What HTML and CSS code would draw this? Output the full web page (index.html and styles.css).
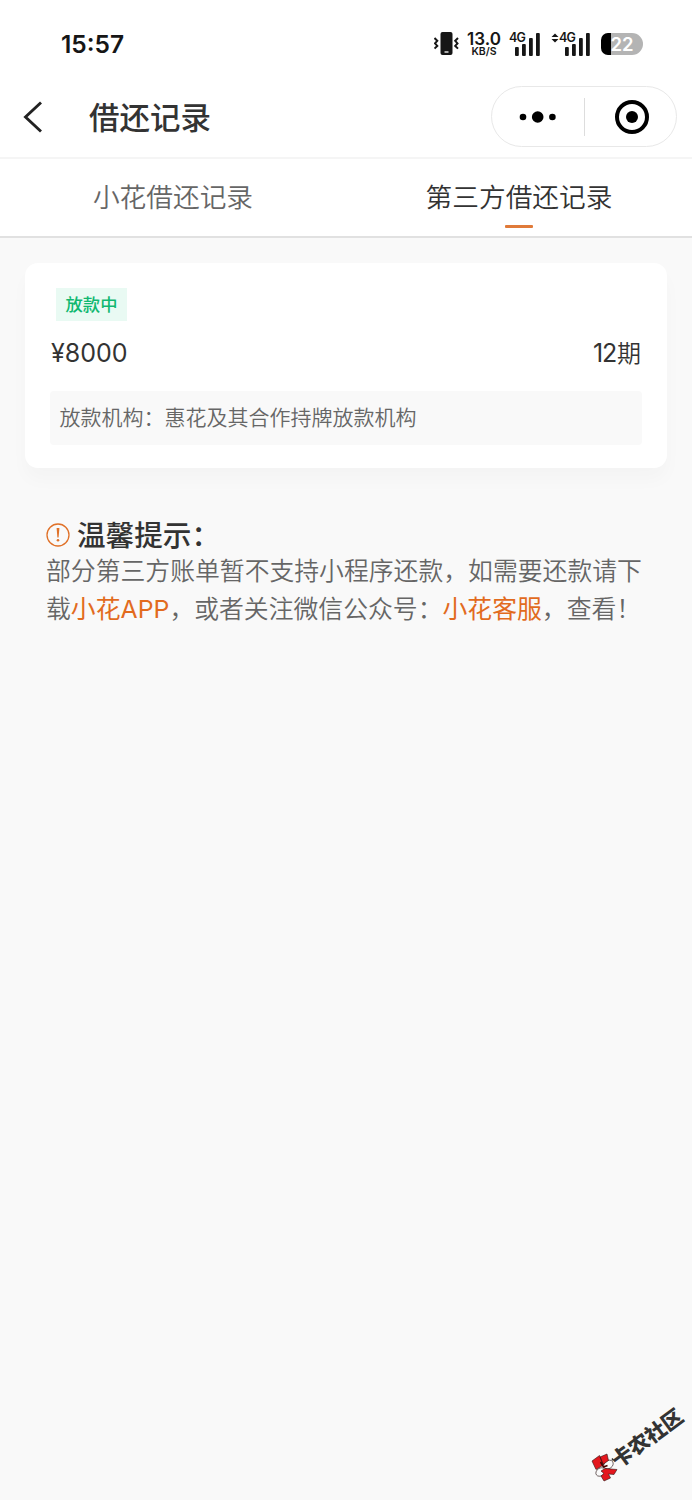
FILE: index.html
```html
<!DOCTYPE html>
<html lang="zh-CN">
<head>
<meta charset="utf-8">
<title>借还记录</title>
<link rel="stylesheet" href="styles.css">
</head>
<body>
<div class="screen">
  <header class="top">
    <div class="status">
      <span class="time">15:57</span>
      <div class="status-icons">
        <svg class="vibrate" width="26" height="26" viewBox="0 0 26 26">
          <rect x="6.500" y="1" width="12" height="23" rx="2" fill="#161616"/>
          <path d="M10.500 21h4" stroke="#fff" stroke-width="1.3"/>
          <path d="M.5 7l2.800 2.800L1 12.400l2.300 2.500-2.800 2.700M24 7l-2.800 2.800 2.300 2.600-2.300 2.500 2.800 2.700" fill="none" stroke="#161616" stroke-width="2"/>
        </svg>
        <div class="speed"><span class="rate">13.0</span><span class="unit">KB/S</span></div>
        <div class="signal">
          <span class="net">4G</span>
          <svg width="26" height="24" viewBox="0 0 26 24" fill="#161616"><rect x="0" y="15" width="3.8" height="9" rx="1"/><rect x="7" y="12" width="3.8" height="12" rx="1"/><rect x="14" y="6" width="3.8" height="18" rx="1"/><rect x="21" y="1" width="3.8" height="23" rx="1"/></svg>
        </div>
        <div class="signal second">
          <svg class="arrows" width="8" height="10" viewBox="0 0 8 10"><path d="M.5 4L4 .5 7.500 4zM.5 6L4 9.500 7.500 6z" fill="#161616"/></svg>
          <span class="net">4G</span>
          <svg width="26" height="24" viewBox="0 0 26 24" fill="#161616"><rect x="0" y="15" width="3.8" height="9" rx="1"/><rect x="7" y="12" width="3.8" height="12" rx="1"/><rect x="14" y="6" width="3.8" height="18" rx="1"/><rect x="21" y="1" width="3.8" height="23" rx="1"/></svg>
        </div>
        <div class="battery"><span>22</span></div>
      </div>
    </div>
    <nav class="nav">
      <svg class="back" width="22" height="34" viewBox="0 0 22 34"><path d="M19 2.500L3.500 17 19 31.500" fill="none" stroke="#222" stroke-width="2.900"/></svg>
      <h1 class="title">借还记录</h1>
      <div class="capsule">
        <svg width="38" height="14" viewBox="0 0 38 14"><circle cx="4" cy="7" r="3.300"/><circle cx="18.700" cy="7" r="5.800"/><circle cx="33.400" cy="7" r="3.300"/></svg>
        <i class="divider"></i>
        <svg width="36" height="36" viewBox="0 0 36 36"><circle cx="18" cy="18" r="15" fill="none" stroke="#000" stroke-width="4"/><circle cx="18" cy="18" r="6"/></svg>
      </div>
    </nav>
  </header>
  <div class="tabs">
    <div class="tab">小花借还记录</div>
    <div class="tab active">第三方借还记录</div>
  </div>
  <main>
    <section class="card">
      <span class="tag">放款中</span>
      <div class="row"><span class="amount">¥8000</span><span class="term"><span class="count">12</span><span class="cjk">期</span></span></div>
      <div class="lender">放款机构：惠花及其合作持牌放款机构</div>
    </section>
    <section class="notice">
      <h2 class="heading">
        <svg width="24" height="24" viewBox="0 0 24 24"><circle cx="12" cy="12" r="11" fill="none" stroke="#e07128" stroke-width="1.300"/><path d="M10.600 5h2.800l-.8 9.500h-1.200z" fill="#e07128"/><circle cx="12" cy="17.300" r="1.300" fill="#e07128"/></svg>
        <span>温馨提示：</span>
      </h2>
      <p>部分第三方账单暂不支持小程序还款，如需要还款请下<br>载<b>小花<span class="latin">APP</span></b>，或者关注微信公众号：<b>小花客服</b>，查看！</p>
    </section>
  </main>
  <svg class="mark" width="40" height="40" viewBox="0 0 40 40">
    <g stroke="#2b1515" stroke-width=".6">
      <ellipse cx="22.500" cy="18.500" rx="5" ry="4" transform="rotate(-35 22.500 18.500)" fill="#fafafa"/>
      <ellipse cx="14.500" cy="26" rx="5" ry="3.800" transform="rotate(-35 14.500 26)" fill="#fafafa"/>
      <path d="M6 15l7.500-5.500 4 9.500-7.500 4.500zM14 11l7-3 1.500 6.500-5.500 4zM15 25l4-2.500 12 1-3 5-5.500-.5 2 4-6.500 3-3-5 3-2.500z" fill="#e4171d"/>
    </g>
    <path d="M14.500 16l3 5 4-1.500" fill="none" stroke="#400" stroke-width="1.500"/>
    <path d="M26 12.500l1.500 2" stroke="#333" stroke-width="1.500"/>
  </svg>
  <span class="watermark">卡农社区</span>
</div>
</body>
</html>
```
FILE: styles.css
```css
* { box-sizing: border-box; }
body {
  margin: 0;
  background: #f9f9f9;
  font-family: "Noto Sans CJK SC", sans-serif;
}
.screen { position: relative; width: 692px; height: 1500px; overflow: hidden; background: #f9f9f9; }
.top { height: 159px; background: #fff; border-bottom: 2px solid #f5f5f5; }
.status {
  display: flex;
  justify-content: space-between;
  height: 76px;
  padding: 12px 49px 0 61px;
  align-items: center;
  color: #161616;
  font-family: Inter, sans-serif;
}
.time { font-size: 24.5px; font-weight: 600; }
.status-icons { display: flex; align-items: center; }
.speed { display: flex; flex-direction: column; width: 36px; margin-left: 6px; align-items: center; }
.rate { font-size: 17px; font-weight: 600; line-height: 14px; }
.unit { font-size: 10.5px; font-weight: 600; line-height: 11px; }
.signal { position: relative; display: flex; align-items: center; padding-left: 6px; margin-left: 7px; }
.second { padding-left: 14px; margin-left: 10px; }
.net { position: absolute; left: 0; top: -1px; font-size: 12.5px; font-weight: 600; line-height: 14px; letter-spacing: -.8px; }
.second .net { left: 8px; }
.arrows { position: absolute; left: 0; top: 1px; }
.battery {
  width: 42px;
  height: 22px;
  margin-left: 10px;
  border-radius: 7px 11px 11px 7px;
  background: linear-gradient(90deg, #000 10px, #b4b4b4 10px);
  color: #fff;
  font-size: 18.5px;
  font-weight: 600;
  line-height: 23px;
  text-align: center;
}
.nav { display: flex; align-items: center; height: 81px; padding: 0 15px 0 22px; }
.title { margin: -2px 0 0 45px; color: #333; font-size: 30.5px; line-height: 44px; font-weight: 500; }
.capsule {
  display: flex;
  align-items: center;
  width: 186px;
  height: 61px;
  margin-left: auto;
  padding-left: 27px;
  border: 1px solid #e8e8e8;
  border-radius: 31px;
}
.divider { width: 1px; height: 38px; margin: 0 29px 0 27px; background: #ddd; }
.tabs { display: grid; grid-template-columns: 1fr 1fr; height: 79px; background: #fff; border-bottom: 2px solid #e1e1e1; }
.tab { position: relative; text-align: center; font-size: 26.7px; line-height: 73px; font-weight: 350; color: #666; }
.active { color: #333; }
.active::after { content: ""; position: absolute; left: 159px; top: 66px; width: 28px; height: 2.5px; background: #e07a39; border-radius: 1px; }
main { padding: 25px 25px 0; }
.card {
  height: 205px;
  padding: 25px;
  background: #fff;
  border-radius: 13px;
  box-shadow: 0 12px 18px rgba(0,0,0,.025);
}
.tag {
  display: block;
  width: 71px;
  height: 33px;
  margin-left: 6px;
  background: #e9faf3;
  color: #10b870;
  font-size: 17.3px;
  font-weight: 500;
  line-height: 31px;
  text-align: center;
}
.row { display: flex; justify-content: space-between; height: 70px; padding: 0 1px; color: #333; line-height: 64px; font-size: 25px; font-family: Inter, sans-serif; }
.term { display: flex; align-items: center; height: 64px; }
.count { letter-spacing: -1.2px; margin-right: 1px; }
.cjk { font-family: "Noto Sans CJK SC", sans-serif; font-size: 24px; font-weight: 350; line-height: 62px; margin-top: -2px; }
.lender { height: 54px; padding-left: 9.5px; background: #f9f9f9; border-radius: 4px; color: #666; font-size: 21px; line-height: 50px; font-weight: 350; white-space: nowrap; }
.notice { padding: 48px 0 0 21px; color: #666; }
.heading { display: flex; align-items: center; gap: 7px; height: 36px; margin: 0; color: #333; font-size: 28.6px; font-weight: 500; line-height: 36px; white-space: nowrap; }
.heading svg { margin-top: 2px; }
.notice p { margin: -1px 0 0; white-space: nowrap; font-size: 24.83px; font-weight: 350; line-height: 37.5px; }
.notice b { color: #e26b1e; font-weight: 400; }
.latin { font-family: Inter, sans-serif; }
.mark { position: absolute; left: 586px; top: 1446px; }
.watermark {
  position: absolute;
  left: 605px;
  top: 1423px;
  transform: rotate(-36.5deg);
  color: #333;
  font-size: 20.7px;
  font-weight: 900;
  line-height: 28px;
  white-space: nowrap;
}
```
